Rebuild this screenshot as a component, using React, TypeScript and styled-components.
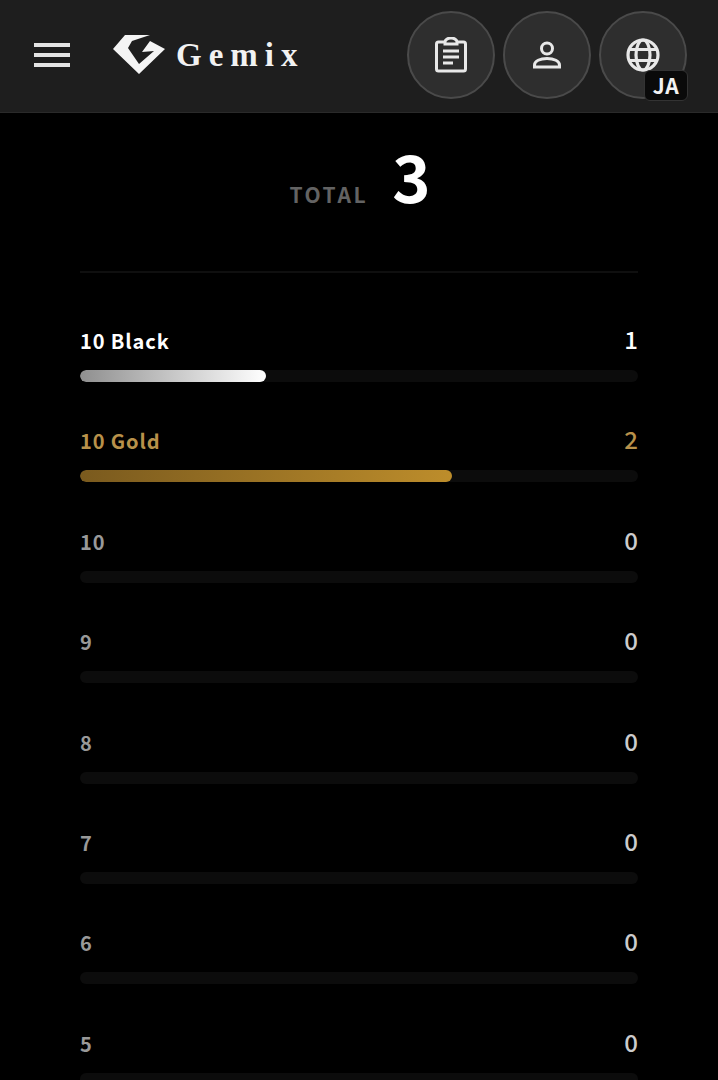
import React, { FC } from "react";
import styled, { createGlobalStyle } from "styled-components";

interface GradeRow {
  label: string;
  count: number;
  tone: "black" | "gold" | "plain";
}

const TOTAL = 3;

const rows: GradeRow[] = [
  { label: "10 Black", count: 1, tone: "black" },
  { label: "10 Gold", count: 2, tone: "gold" },
  { label: "10", count: 0, tone: "plain" },
  { label: "9", count: 0, tone: "plain" },
  { label: "8", count: 0, tone: "plain" },
  { label: "7", count: 0, tone: "plain" },
  { label: "6", count: 0, tone: "plain" },
  { label: "5", count: 0, tone: "plain" },
];

const labelColors = { black: "#ffffff", gold: "#b8914a", plain: "#999999" };
const countColors = { black: "#ffffff", gold: "#b8914a", plain: "#cccccc" };
const fills = {
  black: "linear-gradient(90deg, #8f8f8f, #ffffff)",
  gold: "linear-gradient(90deg, #7a5a1e, #bd8d2b)",
  plain: "none",
};

const GlobalStyle = createGlobalStyle`
  html, body {
    margin: 0;
    padding: 0;
    background: #000;
    height: 100%;
    overflow: hidden;
  }
  body {
    font-family: "Noto Sans CJK JP", "Noto Sans", sans-serif;
  }
`;

const Page = styled.div`
  width: 718px;
  height: 1080px;
  overflow: hidden;
  background: #000;
`;

const Header = styled.header`
  height: 113px;
  box-sizing: border-box;
  background: #1e1e1e;
  border-bottom: 1px solid #2a2a2a;
  display: flex;
  align-items: center;
  padding: 0 31px 3px 34px;
`;

const MenuButton = styled.div`
  width: 36px;
  display: flex;
  flex-direction: column;
  gap: 6px;
  margin-right: 43px;

  span {
    display: block;
    height: 4px;
    background: #e4e4e4;
  }
`;

const Brand = styled.div`
  display: flex;
  align-items: center;
  gap: 10px;
  flex: 1;
`;

const BrandName = styled.span`
  font-family: "Liberation Serif", serif;
  font-size: 33px;
  font-weight: 700;
  letter-spacing: 7px;
  color: #f2f2f2;
  line-height: 1;
  margin-top: 2px;
`;

const Actions = styled.div`
  display: flex;
  gap: 8px;
`;

const RoundButton = styled.div`
  position: relative;
  width: 88px;
  height: 88px;
  box-sizing: border-box;
  border-radius: 50%;
  background: #2e2e2e;
  border: 2px solid #4a4a4a;
  display: flex;
  align-items: center;
  justify-content: center;
  color: #e8e8e8;
`;

const LangBadge = styled.span`
  position: absolute;
  right: -3px;
  bottom: -4px;
  width: 44px;
  height: 31px;
  box-sizing: border-box;
  border-radius: 6px;
  background: #0a0a0a;
  border: 1px solid #333;
  display: flex;
  align-items: center;
  justify-content: center;
  font-size: 21px;
  font-weight: 700;
  letter-spacing: 0.5px;
  line-height: 1;
  color: #f2f2f2;
`;

const Content = styled.main`
  padding: 0 80px;
`;

const Summary = styled.section`
  height: 160px;
  box-sizing: border-box;
  border-bottom: 2px solid #0f0f0f;
  display: flex;
  justify-content: center;
  align-items: flex-start;
  gap: 24px;
  padding-top: 18px;
  padding-left: 2px;
`;

const SummaryLabel = styled.span`
  font-size: 21px;
  font-weight: 700;
  letter-spacing: 2.6px;
  color: #636363;
  line-height: 28px;
  margin-top: 49px;
`;

const SummaryValue = styled.span`
  font-size: 65px;
  font-weight: 700;
  line-height: 88px;
  color: #fff;
`;

const List = styled.section`
  display: flex;
  flex-direction: column;
  gap: 41.4px;
  padding-top: 50px;
`;

const Row = styled.div`
  display: flex;
  flex-direction: column;
  gap: 15px;
`;

const RowHead = styled.div`
  display: flex;
  justify-content: space-between;
  align-items: baseline;
  height: 32px;
  line-height: 32px;
`;

const RowLabel = styled.span<{ $tone: GradeRow["tone"] }>`
  font-size: 20px;
  font-weight: 700;
  letter-spacing: 0.9px;
  color: ${({ $tone }) => labelColors[$tone]};
`;

const RowCount = styled.span<{ $tone: GradeRow["tone"] }>`
  font-size: 24px;
  font-weight: 500;
  color: ${({ $tone }) => countColors[$tone]};
`;

const Track = styled.div`
  height: 12px;
  border-radius: 6px;
  background: #0c0c0c;
  overflow: hidden;
`;

const Fill = styled.div<{ $tone: GradeRow["tone"] }>`
  height: 100%;
  border-radius: 6px;
  background: ${({ $tone }) => fills[$tone]};
`;

const Logo: FC = () => (
  <svg width="53" height="41" viewBox="0 0 53 41" aria-hidden="true">
    <path
      fill="#f4f4f4"
      d="M0 15 L12 1 L37 1 L19 7 L15 14 L26 30 L41 17 L29 18 L37 7 L52 15 L26 40 Z"
    />
  </svg>
);

const ClipboardIcon: FC = () => (
  <svg width="32" height="36" viewBox="0 0 32 36" fill="none" stroke="currentColor" strokeWidth="3">
    <path d="M10 5 H3.5 A2 2 0 0 0 1.5 7 V32 A2 2 0 0 0 3.5 34 H28.5 A2 2 0 0 0 30.5 32 V7 A2 2 0 0 0 28.5 5 H22" />
    <path d="M10 7 V5 A6 4 0 0 1 22 5 V7 Z" />
    <path d="M8 14 H24 M8 20 H24 M8 26 H18" />
  </svg>
);

const PersonIcon: FC = () => (
  <svg width="28" height="28" viewBox="0 0 28 28" fill="none" stroke="currentColor" strokeWidth="3">
    <circle cx="14" cy="7.5" r="5.5" />
    <path d="M1.5 26 V24 C1.5 20 7 17.5 14 17.5 C21 17.5 26.5 20 26.5 24 V26 Z" />
  </svg>
);

const GlobeIcon: FC = () => (
  <svg width="34" height="34" viewBox="0 0 34 34" fill="none" stroke="currentColor" strokeWidth="3.2">
    <circle cx="17" cy="17" r="15" />
    <ellipse cx="17" cy="17" rx="7" ry="15" />
    <path d="M3.5 11.5 H30.5 M3.5 22.5 H30.5" />
  </svg>
);

export default function App() {
  return (
    <Page>
      <GlobalStyle />
      <Header>
        <MenuButton>
          <span />
          <span />
          <span />
        </MenuButton>
        <Brand>
          <Logo />
          <BrandName>Gemix</BrandName>
        </Brand>
        <Actions>
          <RoundButton>
            <ClipboardIcon />
          </RoundButton>
          <RoundButton>
            <PersonIcon />
          </RoundButton>
          <RoundButton>
            <GlobeIcon />
            <LangBadge>JA</LangBadge>
          </RoundButton>
        </Actions>
      </Header>
      <Content>
        <Summary>
          <SummaryLabel>TOTAL</SummaryLabel>
          <SummaryValue>{TOTAL}</SummaryValue>
        </Summary>
        <List>
          {rows.map((row) => (
            <Row key={row.label}>
              <RowHead>
                <RowLabel $tone={row.tone}>{row.label}</RowLabel>
                <RowCount $tone={row.tone}>{row.count}</RowCount>
              </RowHead>
              <Track>
                {row.count > 0 && (
                  <Fill $tone={row.tone} style={{ width: `${(row.count / TOTAL) * 100}%` }} />
                )}
              </Track>
            </Row>
          ))}
        </List>
      </Content>
    </Page>
  );
}
